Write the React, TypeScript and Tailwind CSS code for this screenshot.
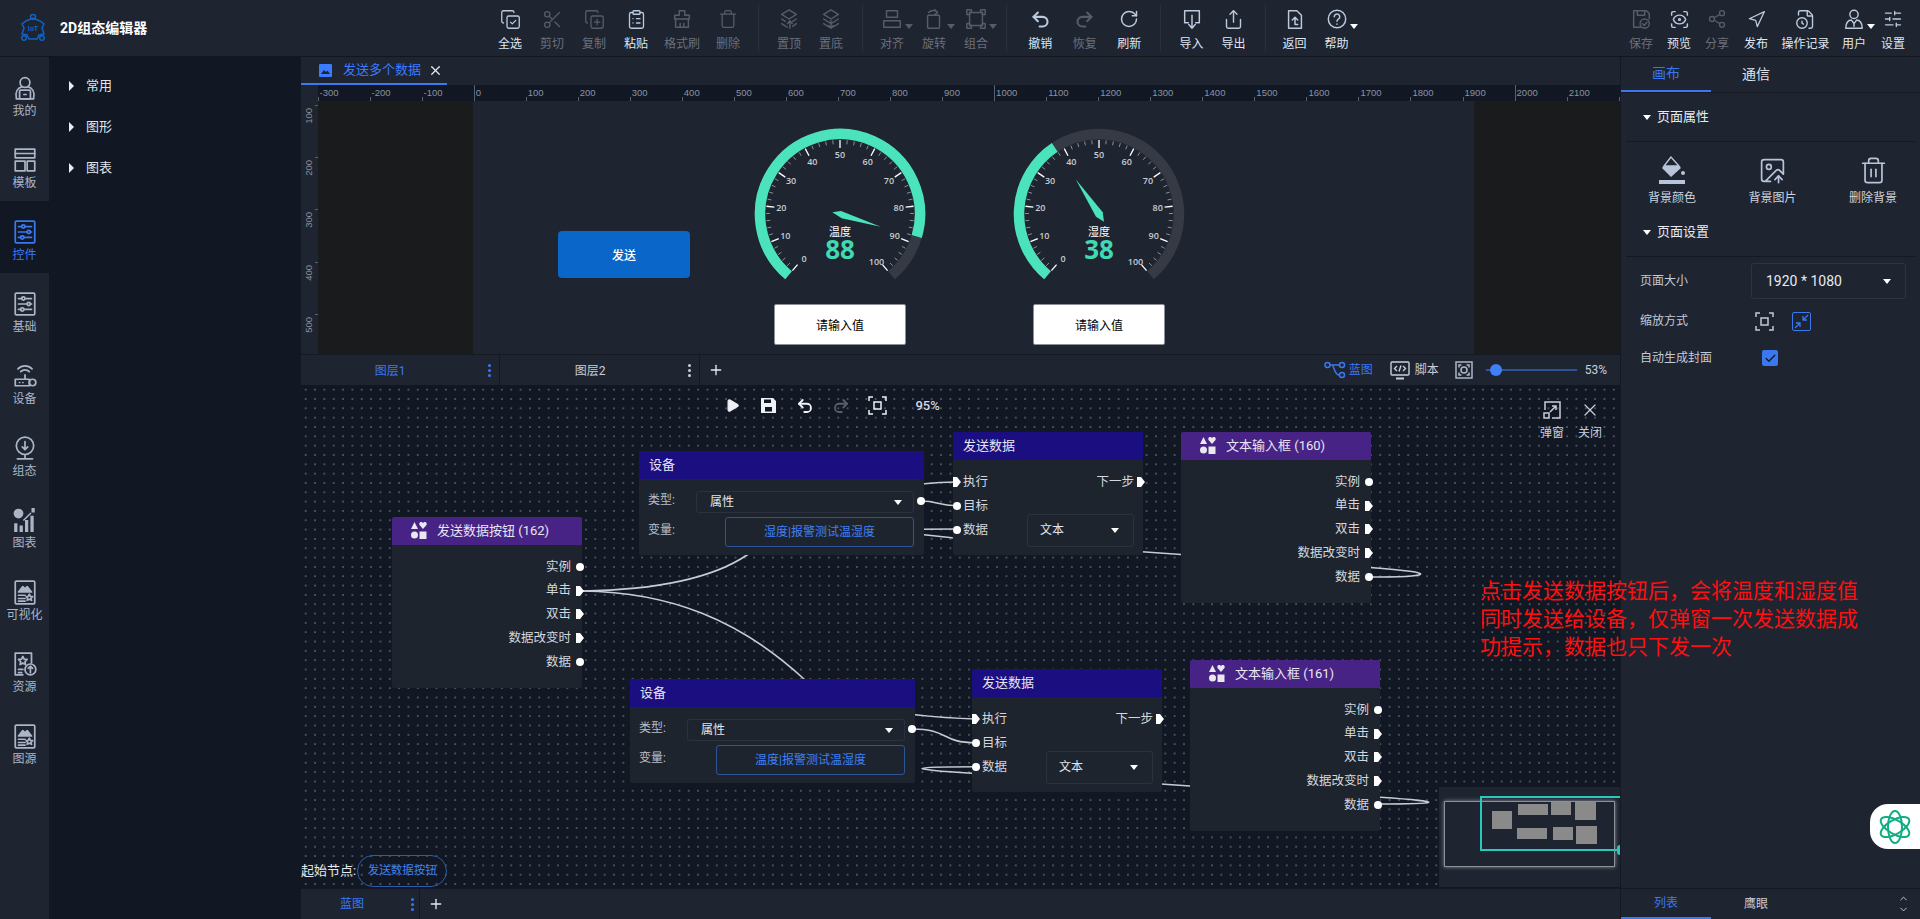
import React from 'react';
import {
  CopyCheck, Scissors, CopyPlus, ClipboardList, Trash, Undo2, Redo2, RotateCw, Share, Share2, ScanEye,
  Navigation, FileClock, SlidersHorizontal, X, Plus, Play, ImageUp, Trash2, Check, ChevronUp, ChevronDown,
} from 'lucide-react';

const Caret = ({ className = 'border-t-white' }: { className?: string }) => (
  <span className={`inline-block w-0 h-0 border-x-[4.5px] border-t-[5px] border-x-transparent ${className}`} />
);

const RightCaret = () => <span className="w-0 h-0 border-y-[5px] border-l-[5px] border-y-transparent border-l-[#e8edf5]" />;

// small hand drawn toolbar icons, lucide has nothing close for these
const Svg = ({ children, size = 22 }: { children: React.ReactNode; size?: number }) => (
  <svg width={size} height={size} viewBox="0 0 24 24" fill="none" stroke="currentColor" strokeWidth="1.6" strokeLinecap="round" strokeLinejoin="round">
    {children}
  </svg>
);

const BrushIcon = () => <Svg><path d="M9 3h6v5h5v4H4V8h5z" /><path d="M5 12v9h14v-9M10 21v-4M14 21v-4" /></Svg>;
const TopIcon = () => <Svg><path d="M12 2l8 5-8 5-8-5z" /><path d="M4 12l4 2.5M20 12l-4 2.5M4 17l6 4M20 17l-4 3" /><path d="M13 22v-8M10.500 17l2.500-3 2.500 3" /></Svg>;
const BottomIcon = () => <Svg><path d="M12 2l8 5-8 5-8-5z" /><path d="M4 12l8 5 8-5M4 17l6 4M20 17l-6 4" /><path d="M12 14v8M9.500 19l2.500 3 2.500-3" /></Svg>;
const AlignIcon = () => <Svg><rect x="6" y="3" width="12" height="7" /><rect x="3" y="14" width="18" height="7" /></Svg>;
const RotateIcon = () => <Svg><rect x="5" y="8" width="13" height="14" rx="1" /><path d="M6 5c3-3 8-3 10 0M13 2l3 3-3 2" /></Svg>;
const GroupIcon = () => <Svg><rect x="5" y="5" width="14" height="14" /><path d="M2 2h5v3H5v2H2zM17 2h5v5h-3V5h-2zM2 17h3v2h2v3H2zM19 17h3v5h-5v-3h2z" /></Svg>;
const ImportIcon = () => <Svg><path d="M8 16H4V3h16v13h-4" /><path d="M12 8v14M8.500 18l3.500 4 3.500-4" /></Svg>;
const BackIcon = () => <Svg><path d="M6 3h8l5 5v14H5V3z" /><path d="M12 10v8h3M9 13l3-3 3 3" /></Svg>;
const HelpIcon = () => <Svg><circle cx="12" cy="12" r="9.500" /><path d="M9 9.500a3 3 0 1 1 4.500 2.600c-1 .6-1.500 1.200-1.500 2.400M12 17.500v.2" /></Svg>;
const SaveCheckIcon = () => <Svg><path d="M12 21H4V3h14l3 3v6" /><path d="M8 3v5h8V3" /><circle cx="16" cy="17" r="5" /><path d="M13.500 17l2 2 3-3.500" /></Svg>;
const UserIcon = () => <Svg><circle cx="12" cy="7" r="4.500" /><path d="M3 22c0-6 3-9 6-9l3 4 3-4c3 0 6 3 6 9zM12 17v3" /></Svg>;

const PersonLaptop = () => <Svg size={26}><circle cx="12" cy="7" r="4.500" /><path d="M4 21c-1-5 1-9 5-10M20 21c1-5-1-9-5-10" /><rect x="7" y="14" width="10" height="8" rx="1" /><path d="M4 22h16M11 18h2" /></Svg>;
const TemplateIcon = () => <Svg size={26}><rect x="3" y="2" width="18" height="8" /><rect x="3" y="13" width="9" height="9" /><rect x="14" y="13" width="7" height="9" /><path d="M3 6h18" /></Svg>;
const SlidersBox = () => <Svg size={26}><rect x="3" y="2" width="18" height="20" rx="1" /><path d="M6 7h3M12 7h6M6 12h8M17 12h1M6 17h2M11 17h7" /><circle cx="10.500" cy="7" r="1.500" /><circle cx="15.500" cy="12" r="1.500" /><circle cx="9.500" cy="17" r="1.500" /></Svg>;
const RouterIcon = () => <Svg size={26}><rect x="3" y="15" width="13" height="6" /><circle cx="19" cy="18" r="3" /><path d="M7 18h.1M10 18h.1M12 15V11M8 8a5.500 5.500 0 0 1 8 0M5.500 5.500a9 9 0 0 1 13 0" /></Svg>;
const WebcamIcon = () => <Svg size={26}><circle cx="12" cy="10" r="8" /><path d="M12 6v7M9.500 11l2.500 2.500 2.500-2.500M5 22h14M12 18v4" /></Svg>;
const ChartIcon = () => (
  <svg width="26" height="26" viewBox="0 0 24 24" fill="currentColor">
    <circle cx="6" cy="6" r="4.500" />
    <path d="M2 15h3v8H2zM7 17h3v6H7zM12 12h3v11h-3zM17 8h3v15h-3z" />
    <path d="M18 1h3v4h-3zM10 12l7-7 1 1-7 7z" />
  </svg>
);
const PictureDoc = () => (
  <Svg size={26}>
    <rect x="3" y="2" width="18" height="21" rx="1" />
    <path d="M6 12l4-5 2 2 2-2 4 5z" fill="currentColor" />
    <path d="M6 15h6M6 18h6M6 20.500h6" />
    <path d="M16 14l1 2 2 .2-1.500 1.500.5 2-2-1-2 1 .5-2-1.500-1.500 2-.2z" />
  </Svg>
);
const FileStar = () => (
  <Svg size={26}>
    <path d="M10 22H3V2h15v9" />
    <path d="M10 5l1.200 2.500 2.800.3-2 2 .5 2.700-2.500-1.300-2.500 1.300.5-2.700-2-2 2.800-.3z" />
    <path d="M6 17h4M6 20h3" />
    <circle cx="17" cy="17" r="5" />
    <path d="M17 20v-6M15 16l2-2 2 2" />
  </Svg>
);
const PaintBucket = () => (
  <svg width="30" height="30" viewBox="0 0 30 30" fill="none">
    <path d="M14 2L5 13l9 9 10-9z" fill="#b7c4da" />
    <path d="M14 2L7 11h15z" fill="#1e2430" stroke="#b7c4da" strokeWidth="1.400" />
    <circle cx="26" cy="18" r="2" fill="#b7c4da" />
    <rect x="2" y="25" width="26" height="4" fill="#b7c4da" />
  </svg>
);
const NodeShapes = () => (
  <svg width="16" height="18" viewBox="0 0 16 18" fill="#e8e8ee">
    <path d="M3.500 0L7 7H0z" />
    <path d="M12 7L8.500 3C7.800 1 9 0 10 0c1 0 1.700.5 2 1.200C12.300.500 13 0 14 0c1 0 2.200 1 1.500 3z" />
    <circle cx="3.500" cy="13" r="3.500" />
    <rect x="8.500" y="9.500" width="7" height="7.500" />
  </svg>
);
const LogoIcon = () => (
  <svg width="26" height="30" viewBox="0 0 26 30" fill="none" stroke="#0f62c4" strokeWidth="1.500">
    <circle cx="13" cy="4" r="2.500" />
    <path d="M6 8l7-3 7 3 4 3-2 4 2 6-5 1-2 4h-8l-2-4-5-1 2-6-2-4z" />
    <circle cx="4" cy="25" r="2.300" />
    <circle cx="22" cy="25" r="2.300" />
    <text x="13" y="18" fontSize="7" fontWeight="700" fill="#0f62c4" stroke="none" textAnchor="middle">IoT</text>
  </svg>
);
const BlueprintIcon = () => (
  <svg width="22" height="18" viewBox="0 0 22 18" fill="none" stroke="currentColor" strokeWidth="1.500">
    <circle cx="3.500" cy="4" r="2.500" />
    <circle cx="18" cy="4" r="2.500" />
    <circle cx="18" cy="14" r="2.500" />
    <path d="M6 4h9.500M8 4c2 0 2 10 7.500 10" />
  </svg>
);
const ScriptIcon = () => (
  <svg width="20" height="19" viewBox="0 0 20 19" fill="none" stroke="currentColor" strokeWidth="1.400">
    <rect x="1" y="1" width="18" height="13" rx="1" />
    <path d="M6 17.500h8" strokeWidth="2" />
    <path d="M7 5L4.500 7.500 7 10M13 5l2.500 2.500L13 10M11 4.500l-2 6" />
  </svg>
);
const FitIcon = ({ size = 18 }: { size?: number }) => (
  <svg width={size} height={size} viewBox="0 0 18 18" fill="none" stroke="currentColor" strokeWidth="1.500">
    <rect x="1" y="1" width="16" height="16" />
    <circle cx="9" cy="9" r="3" />
    <path d="M4 6.500V4h2.500M14 6.500V4h-2.500M4 11.500V14h2.500M14 11.500V14h-2.500" />
  </svg>
);
const FloppyFilled = () => (
  <svg width="17" height="17" viewBox="0 0 17 17" fill="currentColor">
    <path fillRule="evenodd" d="M1 1h12l3 3v12H1zM4 2.500V6h7V2.500zM5 10v4.500h7V10z" />
  </svg>
);
const BoxFitIcon = () => (
  <svg width="19" height="19" viewBox="0 0 19 19" fill="none" stroke="currentColor" strokeWidth="1.500">
    <path d="M1 5V1h4M14 1h4v4M1 14v4h4M18 14v4h-4" />
    <rect x="6" y="6" width="7" height="7" />
  </svg>
);
const PopupIcon = () => (
  <svg width="20" height="20" viewBox="0 0 20 20" fill="none" stroke="currentColor" strokeWidth="1.500">
    <path d="M3 10V2h15v16h-8" />
    <rect x="2" y="13" width="5" height="5" />
    <path d="M8 12l6-6M10 6h4v4" />
  </svg>
);

type ToolProps = { icon: React.ReactNode; label: string; off?: boolean; caret?: boolean; w?: string };

const Tool = ({ icon, label, off, caret, w = 'w-[42px]' }: ToolProps) => (
  <div className={`flex flex-col items-center pt-[7px] ${w} ${off ? 'text-[#575c68]' : 'text-[#bccade]'}`}>
    <div className="relative h-[24px] flex items-center justify-center">
      {icon}
      {caret && <span className="absolute -right-[10px] bottom-[2px] flex"><Caret className={off ? 'border-t-[#575c68]' : 'border-t-white'} /></span>}
    </div>
    <span className={`mt-[6px] text-[12px] leading-[14px] whitespace-nowrap ${off ? 'text-[#6b707c]' : 'text-[#dfe7f3]'}`}>{label}</span>
  </div>
);

const Sep = ({ className }: { className: string }) => <div className={`w-px h-[46px] mt-[5px] bg-[#2a303c] ${className}`} />;

const railItems: { label: string; icon: React.ReactNode; active?: boolean }[] = [
  { label: '我的', icon: <PersonLaptop /> },
  { label: '模板', icon: <TemplateIcon /> },
  { label: '控件', icon: <SlidersBox />, active: true },
  { label: '基础', icon: <SlidersBox /> },
  { label: '设备', icon: <RouterIcon /> },
  { label: '组态', icon: <WebcamIcon /> },
  { label: '图表', icon: <ChartIcon /> },
  { label: '可视化', icon: <PictureDoc /> },
  { label: '资源', icon: <FileStar /> },
  { label: '图源', icon: <PictureDoc /> },
];

const hTicks = Array.from({ length: 26 }, (_, i) => -300 + i * 100);
const vTicks = [100, 200, 300, 400, 500];

const polar = (r: number, deg: number, c = 90) => {
  const a = (deg * Math.PI) / 180;
  return [c + r * Math.sin(a), c - r * Math.cos(a)];
};

const arc = (r: number, from: number, to: number) => {
  const [x1, y1] = polar(r, from);
  const [x2, y2] = polar(r, to);
  return `M${x1} ${y1}A${r} ${r} 0 ${to - from > 180 ? 1 : 0} 1 ${x2} ${y2}`;
};

const Gauge = ({ value, label, needle, className }: { value: number; label: string; needle: string; className: string }) => {
  const end = -140 + value * 2.8;
  const ticks = Array.from({ length: 51 }, (_, i) => i);
  return (
    <svg width="180" height="180" viewBox="0 0 180 180" className={`absolute ${className}`}>
      <path d={arc(80, -140, 140)} fill="none" stroke="#363a45" strokeWidth="10.500" />
      <path d={arc(80, -140, end)} fill="none" stroke="#4ae3bc" strokeWidth="10.500" />
      {ticks.map((i) => {
        const deg = -140 + i * 5.6;
        const major = i % 5 === 0;
        const [x1, y1] = polar(74, deg);
        const [x2, y2] = polar(major ? 66 : 70, deg);
        return <line key={i} x1={x1} y1={y1} x2={x2} y2={y2} stroke={major ? '#ffffff' : '#8b8f98'} strokeWidth={major ? 1.300 : 1} />;
      })}
      {Array.from({ length: 11 }, (_, i) => {
        const [x, y] = polar(i === 10 ? 63 : 59, -140 + i * 28);
        return (
          <text key={i} x={i === 10 ? x - 4 : i === 0 ? x + 2 : x} y={y + 3} fontSize="9" fontWeight="600" fill="#c9ccd2" textAnchor="middle" fontFamily="'Open Sans', sans-serif">
            {i * 10}
          </text>
        );
      })}
      <polygon points={needle} fill="#4ae3bc" />
      <text x="90" y="112" fontSize="11" fill="#ffffff" textAnchor="middle" fontFamily="'Noto Sans CJK SC', sans-serif">{label}</text>
      <text x="90" y="135" fontSize="26" fontWeight="700" fill="#40d9b3" textAnchor="middle" fontFamily="'Open Sans', sans-serif">{value}</text>
    </svg>
  );
};

const Port = ({ kind }: { kind: 'dot' | 'exec' }) =>
  kind === 'dot' ? (
    <span className="w-[8px] h-[8px] rounded-full bg-white shrink-0" />
  ) : (
    <svg width="8" height="10" viewBox="0 0 8 10" className="shrink-0"><path d="M0 0h4l4 5-4 5H0z" fill="#fff" /></svg>
  );

const compRows: { label: string; kind: 'dot' | 'exec' }[] = [
  { label: '实例', kind: 'dot' },
  { label: '单击', kind: 'exec' },
  { label: '双击', kind: 'exec' },
  { label: '数据改变时', kind: 'exec' },
  { label: '数据', kind: 'dot' },
];

const ComponentNode = ({ title, className }: { title: string; className: string }) => (
  <div className={`absolute w-[190px] h-[171px] bg-[#1e242e] rounded-[2px] ${className}`}>
    <div className="h-[28px] bg-[#472385] flex items-center pl-[19px] text-[13px] text-[#e9e6f2] rounded-t-[2px]">
      <NodeShapes />
      <span className="ml-[10px]">{title}</span>
    </div>
    <div className="pt-[10px] flex flex-col">
      {compRows.map((r) => (
        <div key={r.label} className="h-[23.750px] flex items-center justify-end gap-[5px] -mr-[2px] text-[12.500px] text-[#d3d7de]">
          {r.label}
          <Port kind={r.kind} />
        </div>
      ))}
    </div>
  </div>
);

const DeviceNode = ({ variable, className }: { variable: string; className: string }) => (
  <div className={`absolute w-[285px] h-[104px] bg-[#1e242e] rounded-[2px] ${className}`}>
    <div className="h-[28px] bg-[#1b0e80] flex items-center pl-[10px] text-[13px] text-[#e6e5f2]">设备</div>
    <div className="pl-[9px] pr-[10px] pt-[12px] text-[12px] text-[#b9bec8]">
      <div className="h-[22px] flex items-center justify-between">
        <span className="-mt-[4px]">类型:</span>
        <div className="w-[218px] h-[22px] border border-[#2c323d] rounded-[3px] flex items-center justify-between pl-[13px] pr-[11px] text-[#e3e6ec]">
          属性
          <Caret />
        </div>
      </div>
      <div className="mt-[4px] h-[30px] flex items-center justify-between">
        <span className="-mt-[4px]">变量:</span>
        <div className="w-[189px] h-[30px] border border-[#2d5398] rounded-[3px] flex items-center justify-center text-[#3f80f5]">{variable}</div>
      </div>
    </div>
    <span className="absolute left-[278px] top-[46px] flex"><Port kind="dot" /></span>
  </div>
);

const SendNode = ({ className }: { className: string }) => (
  <div className={`absolute w-[190px] h-[123px] bg-[#1e242e] rounded-[2px] ${className}`}>
    <div className="h-[28px] bg-[#1b0e80] flex items-center pl-[10px] text-[13px] text-[#e6e5f2]">发送数据</div>
    <div className="pt-[10px] text-[12.500px] text-[#d3d7de]">
      <div className="h-[24px] flex items-center">
        <Port kind="exec" />
        <span className="ml-[2px]">执行</span>
        <span className="ml-auto mr-[3px]">下一步</span>
        <span className="flex -mr-[2px]"><Port kind="exec" /></span>
      </div>
      <div className="h-[24px] flex items-center">
        <Port kind="dot" />
        <span className="ml-[2px]">目标</span>
      </div>
      <div className="h-[24px] flex items-center">
        <Port kind="dot" />
        <span className="ml-[2px]">数据</span>
        <div className="ml-auto mr-[9px] w-[107px] h-[33px] shrink-0 border border-[#2c323d] rounded-[3px] flex items-center justify-between pl-[12px] pr-[14px] text-[12px] text-[#e3e6ec]">
          文本
          <Caret />
        </div>
      </div>
    </div>
  </div>
);

// page coordinates, the svg viewBox starts where the blueprint pane starts
const wires = [
  'M582 591C650 590 710 580 747 555C780 530 860 482 956 482',
  'M582 591C670 592 740 620 804 679C830 700 880 716 976 719',
  'M921 501C938 501 938 505.700 956 505.700',
  'M1368 577C1430 577 1445 573 1370 567.500L1181 554.500L1142 551.700L952 537.700L924 534.700C880 530 880 529 956 529',
  'M912 729C950 729 940 742.700 976 742.700',
  'M1378 804C1440 804 1450 802 1380 797.300L1190 786L1161 784L972 773.300C905 769 905 766.700 976 766.700',
];

const miniNodes = [
  'left-[53px] top-[24px] w-[20px] h-[18px]',
  'left-[79px] top-[17px] w-[30px] h-[11px]',
  'left-[112px] top-[15px] w-[20px] h-[13px]',
  'left-[136px] top-[15px] w-[21px] h-[18px]',
  'left-[78px] top-[41px] w-[30px] h-[11px]',
  'left-[114px] top-[40px] w-[20px] h-[13px]',
  'left-[137px] top-[39px] w-[21px] h-[18px]',
];

export default function App() {
  return (
    <div className="h-screen w-screen overflow-hidden flex flex-col bg-[#1e2430] text-[#dfe7f3] [font-family:Roboto,'Noto_Sans_CJK_SC',sans-serif]">
      <header className="h-[57px] shrink-0 flex border-b border-[#12161f]">
        <div className="w-[489px] shrink-0 flex items-center pl-[20px]">
          <LogoIcon />
          <span className="ml-[14px] text-[14px] font-bold text-white">2D组态编辑器</span>
        </div>
        <Tool icon={<CopyCheck size={21} strokeWidth={1.500} />} label="全选" />
        <Tool icon={<Scissors size={21} strokeWidth={1.500} />} label="剪切" off />
        <Tool icon={<CopyPlus size={21} strokeWidth={1.500} />} label="复制" off />
        <Tool icon={<ClipboardList size={21} strokeWidth={1.500} />} label="粘贴" />
        <Tool icon={<BrushIcon />} label="格式刷" off w="w-[50px]" />
        <Tool icon={<Trash size={20} strokeWidth={1.500} />} label="删除" off />
        <Sep className="mx-[9px]" />
        <Tool icon={<TopIcon />} label="置顶" off />
        <Tool icon={<BottomIcon />} label="置底" off />
        <Sep className="ml-[10px] mr-[8px]" />
        <Tool icon={<AlignIcon />} label="对齐" off caret />
        <Tool icon={<RotateIcon />} label="旋转" off caret />
        <Tool icon={<GroupIcon />} label="组合" off caret />
        <Sep className="ml-[9px] mr-[11px]" />
        <Tool icon={<Undo2 size={21} strokeWidth={2.400} />} label="撤销" w="w-[44.500px]" />
        <Tool icon={<Redo2 size={21} strokeWidth={2.400} />} label="恢复" off w="w-[44.500px]" />
        <Tool icon={<RotateCw size={20} strokeWidth={1.800} />} label="刷新" w="w-[44.500px]" />
        <Sep className="ml-[8px] mr-[10px]" />
        <Tool icon={<ImportIcon />} label="导入" />
        <Tool icon={<Share size={21} strokeWidth={1.600} />} label="导出" />
        <Sep className="ml-[10px] mr-[8px]" />
        <Tool icon={<BackIcon />} label="返回" />
        <Tool icon={<HelpIcon />} label="帮助" caret />
        <div className="ml-auto flex pr-[7px]">
          <Tool icon={<SaveCheckIcon />} label="保存" off w="w-[38px]" />
          <Tool icon={<ScanEye size={21} strokeWidth={1.700} />} label="预览" w="w-[38px]" />
          <Tool icon={<Share2 size={20} strokeWidth={1.600} />} label="分享" off w="w-[38px]" />
          <Tool icon={<Navigation size={19} strokeWidth={1.600} />} label="发布" w="w-[40px]" />
          <Tool icon={<FileClock size={21} strokeWidth={1.600} />} label="操作记录" w="w-[59px]" />
          <Tool icon={<UserIcon />} label="用户" caret w="w-[38px]" />
          <Tool icon={<SlidersHorizontal size={20} strokeWidth={1.600} />} label="设置" w="w-[40px]" />
        </div>
      </header>

      <div className="flex-1 flex min-h-0">
        <nav className="w-[49px] shrink-0 flex flex-col">
          {railItems.map((item) => (
            <div key={item.label} className={`h-[72px] flex flex-col items-center pt-[19px] ${item.active ? 'bg-[#111824] text-[#3b78f0]' : 'text-[#aab5c8]'}`}>
              <div className="h-[24px] flex items-center justify-center">{item.icon}</div>
              <span className="mt-[4px] text-[12px] leading-[14px] whitespace-nowrap">{item.label}</span>
            </div>
          ))}
        </nav>

        <aside className="w-[252px] shrink-0 bg-[#111824] pt-[8px] text-[13px] text-[#dfe4ec]">
          {['常用', '图形', '图表'].map((t) => (
            <div key={t} className="h-[41px] flex items-center pl-[20px]">
              <RightCaret />
              <span className="ml-[12px]">{t}</span>
            </div>
          ))}
        </aside>

        <main className="flex-1 min-w-0 flex flex-col">
          <div className="h-[28px] shrink-0 flex">
            <div className="w-[146px] border-b-[2px] border-[#3c78f0] flex items-center pl-[18px] text-[13px] text-[#3b7bff]">
              <svg width="13" height="13" viewBox="0 0 13 13"><path d="M0 1a1 1 0 0 1 1-1h11a1 1 0 0 1 1 1v11a1 1 0 0 1-1 1H1a1 1 0 0 1-1-1z" fill="#3b7bff" /><path d="M2 10l3-4 2 2 1.500-1.500L11 10z" fill="#1e2430" /></svg>
              <span className="ml-[11px]">发送多个数据</span>
              <X size={15} className="ml-[7px] text-[#e6eaf0]" />
            </div>
          </div>

          <div className="h-[16px] shrink-0 flex overflow-hidden bg-[#111824]">
            <div className="w-[16.500px] shrink-0 bg-[#1e2430]" />
            {hTicks.map((t) => (
              <div key={t} className="w-[52.050px] shrink-0 flex">
                <span className={`w-px shrink-0 self-end ${t % 1000 === 0 ? 'h-[16px] bg-[#5a6070]' : 'h-[4px] bg-[#5a6070]'}`} />
                {t < 2200 && <span className="ml-[1px] text-[9.500px] leading-[15px] text-[#8b92a1] [font-family:'Liberation_Sans',sans-serif]">{t}</span>}
              </div>
            ))}
          </div>

          <div className="h-[254px] shrink-0 flex border-b border-[#141923]">
            <div className="w-[17px] shrink-0 overflow-hidden pt-[4px]">
              {vTicks.map((t) => (
                <div key={t} className="h-[52.200px] relative">
                  <span className="absolute right-0 top-0 w-[3px] h-px bg-[#5a6070]" />
                  <span className="absolute left-[3px] top-[3px] [writing-mode:vertical-rl] rotate-180 text-[9.500px] leading-[10px] text-[#8b92a1] [font-family:'Liberation_Sans',sans-serif]">{t}</span>
                </div>
              ))}
            </div>
            <div className="w-[155px] shrink-0 bg-[#1a1b1d]" />
            <div className="flex-1 relative">
              <div className="absolute left-[85px] top-[130px] w-[132px] h-[47px] pt-[2px] rounded-[4px] bg-[#0a66c8] flex items-center justify-center text-[12px] font-medium text-white">发送</div>
              <Gauge value={88} label="温度" className="left-[277px] top-[23px]" needle="130.700,102.700 91,87 82.300,88.300 91.700,94.300" />
              <Gauge value={38} label="湿度" className="left-[536px] top-[23px]" needle="66.700,55.300 93.700,88.300 95,97.700 87,92.700" />
              <div className="absolute left-[301px] top-[203px] w-[132px] h-[41px] pt-[2px] bg-white border border-[#8b8f98] rounded-[2px] flex items-center justify-center text-[12px] text-black">请输入值</div>
              <div className="absolute left-[560px] top-[203px] w-[132px] h-[41px] pt-[2px] bg-white border border-[#8b8f98] rounded-[2px] flex items-center justify-center text-[12px] text-black">请输入值</div>
            </div>
            <div className="w-[146px] shrink-0 bg-[#1a1b1d]" />
          </div>

          <div className="h-[30px] shrink-0 flex items-center text-[12px]">
            <div className="w-[199px] h-full flex items-center border-r border-[#141923] text-[#3b78f0]">
              <span className="w-[178px] pt-[2px] text-center">图层1</span>
              <span className="text-[#3b78f0] flex flex-col gap-[2px] ml-[9px]"><i className="w-[3px] h-[3px] rounded-full bg-current" /><i className="w-[3px] h-[3px] rounded-full bg-current" /><i className="w-[3px] h-[3px] rounded-full bg-current" /></span>
            </div>
            <div className="w-[200px] h-full flex items-center border-r border-[#141923] text-[#c8cfdb]">
              <span className="w-[180px] pt-[2px] text-center">图层2</span>
              <span className="flex flex-col gap-[2px] ml-[8px]"><i className="w-[3px] h-[3px] rounded-full bg-current" /><i className="w-[3px] h-[3px] rounded-full bg-current" /><i className="w-[3px] h-[3px] rounded-full bg-current" /></span>
            </div>
            <Plus size={16} className="ml-[8px] text-[#e6eaf0]" />
            <div className="ml-auto flex items-center pr-[13px]">
              <span className="flex items-center gap-[3px] text-[#3b78f0]"><BlueprintIcon />蓝图</span>
              <span className="ml-[17px] flex items-center gap-[5px] text-[#c8cfdb]"><ScriptIcon />脚本</span>
              <span className="ml-[16px] flex text-[#aeb7c6]"><FitIcon /></span>
              <div className="ml-[13px] w-[91px] h-[2px] bg-[#2d5398] relative">
                <span className="absolute left-[4px] -top-[5px] w-[12px] h-[12px] rounded-full bg-[#3f80f5]" />
              </div>
              <span className="ml-[8px] text-[#c8cfdb]">53%</span>
            </div>
          </div>

          <div className="flex-1 relative min-h-0 bg-[#111723] bg-[radial-gradient(circle,#b4bac6_0.5px,transparent_0.75px)] bg-[length:9.350px_9.330px]">
            <svg width="1319" height="503" viewBox="301 385 1319 503" className="absolute left-0 top-0" fill="none" stroke="#c8ccd4" strokeWidth="1.600">
              {wires.map((d) => <path key={d} d={d} />)}
            </svg>

            <div className="absolute left-[413px] top-[11px] flex items-center text-[#eef1f6]">
              <span className="w-[36.300px] flex justify-center"><Play size={15} fill="currentColor" /></span>
              <span className="w-[36.300px] flex justify-center"><FloppyFilled /></span>
              <span className="w-[36.300px] flex justify-center"><Undo2 size={18} strokeWidth={2.400} /></span>
              <span className="w-[36.300px] flex justify-center text-[#5a5f6a]"><Redo2 size={18} strokeWidth={2.400} /></span>
              <span className="w-[36.300px] flex justify-center"><BoxFitIcon /></span>
              <span className="ml-[20px] text-[13px] font-medium text-[#d2d8e2]">95%</span>
            </div>

            <div className="absolute left-[1232px] top-[15px] flex text-[#c8cfdb] text-[12px]">
              <div className="w-[38px] flex flex-col items-center gap-[6px]"><PopupIcon /><span className="leading-[14px]">弹窗</span></div>
              <div className="w-[38px] flex flex-col items-center gap-[6px]"><X size={20} strokeWidth={1.500} /><span className="leading-[14px]">关闭</span></div>
            </div>

            <ComponentNode title="发送数据按钮 (162)" className="left-[91px] top-[132px]" />
            <DeviceNode variable="湿度|报警测试温湿度" className="left-[338px] top-[66px]" />
            <SendNode className="left-[652px] top-[47px]" />
            <ComponentNode title="文本输入框 (160)" className="left-[880px] top-[47px]" />
            <DeviceNode variable="温度|报警测试温湿度" className="left-[329px] top-[294px]" />
            <SendNode className="left-[671px] top-[284px]" />
            <ComponentNode title="文本输入框 (161)" className="left-[889px] top-[275px]" />

            <div className="absolute z-10 left-[1179px] top-[192px] w-[382px] text-[21px] leading-[28px] text-[#ff0f0f]">
              点击发送数据按钮后，会将温度和湿度值同时发送给设备，仅弹窗一次发送数据成功提示，数据也只下发一次
            </div>

            <div className="absolute left-0 top-[470px] flex items-center h-[32px]">
              <span className="text-[13px] text-[#e6eaf0]">起始节点:</span>
              <span className="ml-[1px] h-[32px] w-[90px] rounded-full border border-[#2d5ba8] flex items-center justify-center text-[11.500px] text-[#3f80f5]">发送数据按钮</span>
            </div>

            <div className="absolute right-0 top-[402px] w-[181px] h-[100px] bg-[#1e2430] overflow-hidden">
              <div className="absolute left-[5px] top-[14px] w-[171px] h-[66px] border border-[#8d9097] shadow-[0_0_4px_#8d9097]" />
              <div className="absolute left-[41px] top-[9px] w-[145px] h-[55px] border-2 border-[#2cc7bb]" />
              {miniNodes.map((c) => <div key={c} className={`absolute bg-[#8a8a8a] ${c}`} />)}
              <span className="absolute right-0 top-[58px] w-[3px] h-[10px] rounded-l-full bg-[#2cc7bb]" />
            </div>
          </div>

          <div className="h-[31px] shrink-0 flex items-center border-t border-[#141923] text-[12px]">
            <div className="w-[119px] h-full flex items-center border-r border-[#141923] text-[#3b78f0]">
              <span className="w-[102px] text-center">蓝图</span>
              <span className="flex flex-col gap-[2px] ml-[8px]"><i className="w-[3px] h-[3px] rounded-full bg-current" /><i className="w-[3px] h-[3px] rounded-full bg-current" /><i className="w-[3px] h-[3px] rounded-full bg-current" /></span>
            </div>
            <Plus size={16} className="ml-[8px] text-[#e6eaf0]" />
          </div>
        </main>

        <aside className="w-[300px] shrink-0 border-l border-[#141923] relative flex flex-col">
          <div className="h-[36px] shrink-0 flex border-b border-[#141923] text-[14px]">
            <div className="w-[90px] flex items-center justify-center border-b-[2px] border-[#3c78f0] text-[#3b78f0]">画布</div>
            <div className="w-[90px] flex items-center justify-center text-[#dfe4ec]">通信</div>
          </div>
          <div className="mx-[5px] h-[49px] shrink-0 flex items-center border-b border-[#141923] pl-[17px] text-[13px] text-[#e6eaf0]">
            <Caret />
            <span className="ml-[6px]">页面属性</span>
          </div>
          <div className="h-[66px] shrink-0 flex gap-[40.500px] pl-[21px] text-[#b7c4da] text-[12px]">
            {[
              { label: '背景颜色', icon: <PaintBucket /> },
              { label: '背景图片', icon: <ImageUp size={29} strokeWidth={1.400} /> },
              { label: '删除背景', icon: <Trash2 size={29} strokeWidth={1.400} /> },
            ].map((b) => (
              <div key={b.label} className="w-[60px] flex flex-col items-center pt-[13px]">
                <div className="h-[30px] flex items-center">{b.icon}</div>
                <span className="mt-[6px] leading-[14px] text-[#ccd3df]">{b.label}</span>
              </div>
            ))}
          </div>
          <div className="mx-[5px] h-[49px] shrink-0 flex items-center border-b border-[#141923] pl-[17px] text-[13px] text-[#e6eaf0]">
            <Caret />
            <span className="ml-[6px]">页面设置</span>
          </div>
          <div className="pl-[19px] pt-[6px] text-[12px] text-[#c3cad6]">
            <div className="h-[36px] flex items-center">
              <span className="w-[111px] shrink-0">页面大小</span>
              <div className="w-[155px] h-[36px] border border-[#2e3440] rounded-[3px] flex items-center justify-between pl-[14px] pr-[14px] text-[14px] text-[#e6eaf0]">
                1920 * 1080
                <Caret />
              </div>
            </div>
            <div className="mt-[4px] h-[36px] flex items-center">
              <span className="w-[115px] shrink-0">缩放方式</span>
              <span className="flex text-[#c3cad6]"><BoxFitIcon /></span>
              <span className="ml-[18px] w-[19px] h-[19px] border border-[#3b78f0] rounded-[2px] text-[#3b78f0] flex items-center justify-center">
                <svg width="15" height="15" viewBox="0 0 15 15" fill="none" stroke="currentColor" strokeWidth="1.300"><path d="M14 1L9 6M9 2v4h4M1 14l5-5M6 13V9H2" /></svg>
              </span>
            </div>
            <div className="mt-[1px] h-[36px] flex items-center">
              <span className="w-[122px] shrink-0">自动生成封面</span>
              <span className="w-[16px] h-[16px] rounded-[2px] bg-[#3b78f0] flex items-center justify-center">
                <Check size={13} strokeWidth={2.500} className="text-[#141923]" />
              </span>
            </div>
          </div>

          <div className="absolute right-0 top-[747px] w-[50px] h-[45px] rounded-l-[18px] bg-white flex items-center justify-center">
            <svg width="34" height="36" viewBox="0 0 34 36" fill="none" stroke="#0fae84" strokeWidth="2">
              <ellipse cx="17" cy="18" rx="7" ry="16" />
              <ellipse cx="17" cy="18" rx="7" ry="16" transform="rotate(60 17 18)" />
              <ellipse cx="17" cy="18" rx="7" ry="16" transform="rotate(120 17 18)" />
            </svg>
          </div>

          <div className="mt-auto h-[31px] shrink-0 flex border-t border-[#141923] text-[12px]">
            <div className="w-[90px] flex items-center justify-center border-b-[2px] border-[#3c78f0] text-[#3b78f0]">列表</div>
            <div className="w-[90px] flex items-center justify-center text-[#c8cfdb]">鹰眼</div>
            <div className="ml-auto mr-[11px] flex flex-col justify-center text-[#c8cfdb]">
              <ChevronUp size={11} />
              <ChevronDown size={11} />
            </div>
          </div>
        </aside>
      </div>
    </div>
  );
}
